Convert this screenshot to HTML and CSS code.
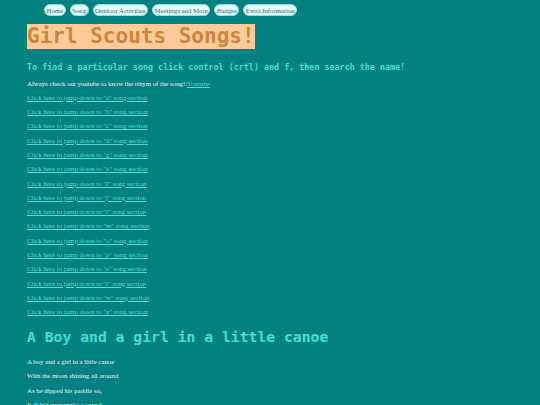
FILE: index.html
```html
<!DOCTYPE html>
<html>
<head>
<meta charset="utf-8">
<link rel="stylesheet" href="styles.css">
</head>
<body>
<nav class="nav">
  <a class="btn" href="#">Home</a>
  <a class="btn" href="#">Song</a>
  <a class="btn" href="#">Outdoor Activities</a>
  <a class="btn" href="#">Meetings and More</a>
  <a class="btn" href="#">Badges</a>
  <a class="btn" href="#">Extra Information</a>
</nav>
<main class="main">
  <h1 class="title">Girl Scouts Songs!</h1>
  <h3 class="subtitle">To find a particular song click control (crtl) and f, then search the name!</h3>
  <p class="text">Always check out youtube to know the rthym of the song!:<a class="link" href="#">Youtube</a></p>
  <p class="text"><a class="link" href="#">Click here to jump down to "a" song section</a></p>
  <p class="text"><a class="link" href="#">Click here to jump down to "b" song section</a></p>
  <p class="text"><a class="link" href="#">Click here to jump down to "c" song section</a></p>
  <p class="text"><a class="link" href="#">Click here to jump down to "d" song section</a></p>
  <p class="text"><a class="link" href="#">Click here to jump down to "g" song section</a></p>
  <p class="text"><a class="link" href="#">Click here to jump down to "h" song section</a></p>
  <p class="text"><a class="link" href="#">Click here to jump down to "i" song section</a></p>
  <p class="text"><a class="link" href="#">Click here to jump down to "j" song section</a></p>
  <p class="text"><a class="link" href="#">Click here to jump down to "l" song section</a></p>
  <p class="text"><a class="link" href="#">Click here to jump down to "m" song section</a></p>
  <p class="text"><a class="link" href="#">Click here to jump down to "o" song section</a></p>
  <p class="text"><a class="link" href="#">Click here to jump down to "p" song section</a></p>
  <p class="text"><a class="link" href="#">Click here to jump down to "s" song section</a></p>
  <p class="text"><a class="link" href="#">Click here to jump down to "t" song section</a></p>
  <p class="text"><a class="link" href="#">Click here to jump down to "w" song section</a></p>
  <p class="text"><a class="link" href="#">Click here to jump down to "y" song section</a></p>
  <h2 class="song">A Boy and a girl in a little canoe</h2>
  <p class="text">A boy and a girl in a little canoe</p>
  <p class="text">With the moon shining all around</p>
  <p class="text">As he dipped his paddle so,</p>
  <p class="text">It didn't even make a sound</p>
</main>
</body>
</html>
```
FILE: styles.css
```css
html, body {
  background: #008080;
}
body {
  margin: 0;
  font-family: "Liberation Serif", "Times New Roman", serif;
}
.nav {
  display: flex;
  gap: 4px;
  padding: 4px 0 0 44px;
  height: 12px;
}
.btn {
  display: inline-block;
  font-size: 6.8px;
  line-height: 8px;
  padding: 1.5px 1.5px;
  color: #2f6f6f;
  background: #e8fbfb;
  border: 1px solid #7fe3e3;
  border-radius: 6px;
  text-decoration: none;
}
.main {
  padding: 0 0 0 27px;
}
.title {
  display: inline-block;
  margin: 8px 0 0 0;
  font-family: "DejaVu Sans Mono", monospace;
  font-weight: bold;
  font-size: 21px;
  line-height: 24.5px;
  color: #cd853f;
  background: #ffcc99;
}
.subtitle {
  margin: 13px 0 8px 0;
  font-family: "DejaVu Sans Mono", monospace;
  font-weight: bold;
  font-size: 8.4px;
  line-height: 10px;
  color: #40e0d0;
}
.text {
  margin: 6.6px 0;
  font-size: 6.8px;
  line-height: 7.7px;
  color: #f2f6f6;
}
.link {
  color: #50dcd0;
}
.song {
  margin: 12px 0 13px 0;
  font-family: "DejaVu Sans Mono", monospace;
  font-weight: bold;
  font-size: 14.72px;
  line-height: 17px;
  color: #40e0d0;
}
```
